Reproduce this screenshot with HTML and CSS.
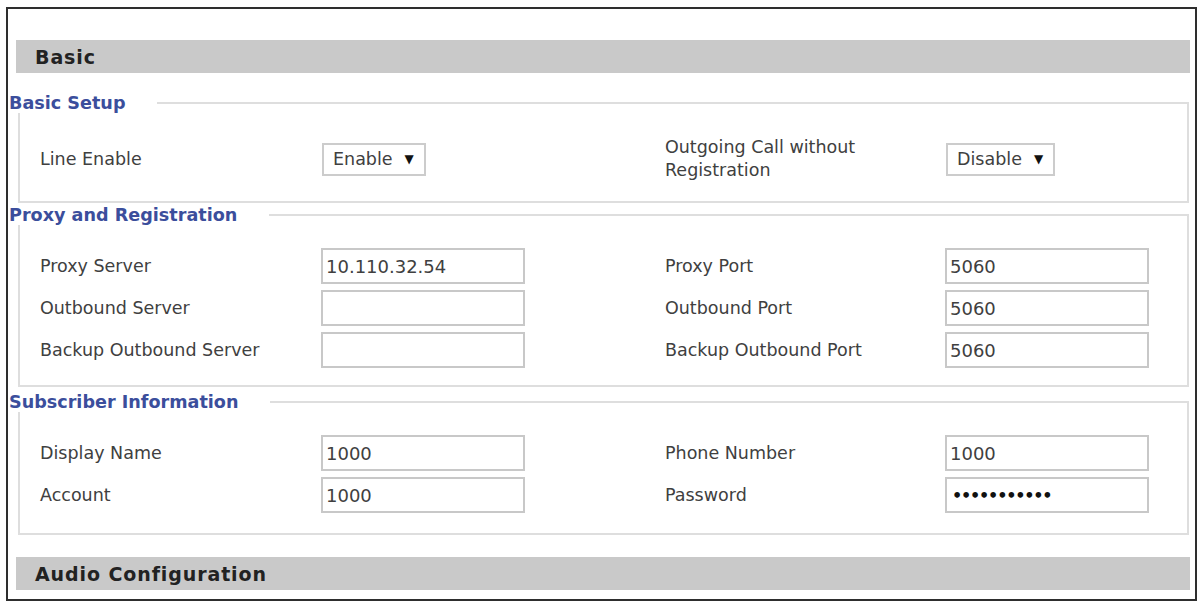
FILE: index.html
```html
<!DOCTYPE html>
<html>
<head>
<meta charset="utf-8">
<title>Line Basic</title>
<link rel="stylesheet" href="styles.css">
</head>
<body>
<div class="frame">
  <div class="bar">Basic</div>

  <fieldset class="group group-first">
    <legend class="legend">Basic Setup</legend>
    <div class="grid">
      <div class="row row-tall">
        <span class="label">Line Enable</span>
        <span class="cell"><span class="select">Enable <span class="arrow">▼</span></span></span>
        <span class="label label-two">Outgoing Call without<br>Registration</span>
        <span class="cell"><span class="select">Disable <span class="arrow">▼</span></span></span>
      </div>
    </div>
  </fieldset>

  <fieldset class="group group-second">
    <legend class="legend">Proxy and Registration</legend>
    <div class="grid">
      <div class="row">
        <span class="label">Proxy Server</span>
        <span class="cell"><input class="field" type="text" value="10.110.32.54"></span>
        <span class="label">Proxy Port</span>
        <span class="cell"><input class="field" type="text" value="5060"></span>
      </div>
      <div class="row">
        <span class="label">Outbound Server</span>
        <span class="cell"><input class="field" type="text" value=""></span>
        <span class="label">Outbound Port</span>
        <span class="cell"><input class="field" type="text" value="5060"></span>
      </div>
      <div class="row">
        <span class="label">Backup Outbound Server</span>
        <span class="cell"><input class="field" type="text" value=""></span>
        <span class="label">Backup Outbound Port</span>
        <span class="cell"><input class="field" type="text" value="5060"></span>
      </div>
    </div>
  </fieldset>

  <fieldset class="group group-third">
    <legend class="legend">Subscriber Information</legend>
    <div class="grid">
      <div class="row">
        <span class="label">Display Name</span>
        <span class="cell"><input class="field" type="text" value="1000"></span>
        <span class="label">Phone Number</span>
        <span class="cell"><input class="field" type="text" value="1000"></span>
      </div>
      <div class="row">
        <span class="label">Account</span>
        <span class="cell"><input class="field" type="text" value="1000"></span>
        <span class="label">Password</span>
        <span class="cell"><input class="field field-pass" type="password" value="12345678901"></span>
      </div>
    </div>
  </fieldset>

  <div class="bar bar-audio">Audio Configuration</div>
</div>
</body>
</html>
```

FILE: styles.css
```css
html, body {
  margin: 0;
  padding: 0;
  background: #ffffff;
}

body {
  width: 1201px;
  font-family: "DejaVu Sans", Verdana, sans-serif;
  color: #3a3a3a;
}

.frame {
  margin: 7px 4px 0 6px;
  border: 2px solid #2e2e2e;
  padding: 31px 5px 9px 8px;
}

.bar {
  height: 33px;
  background: #c9c9c9;
  font-weight: bold;
  font-size: 19px;
  letter-spacing: 0.9px;
  color: #222222;
  padding-left: 19px;
  display: flex;
  align-items: center;
}

.bar-audio {
  margin-top: 22px;
}

.group {
  margin: 0 1px 0 2px;
  border: 2px solid #dedede;
  padding: 0 0 16px 0;
  min-width: 0;
}

.group-first {
  margin-top: 20px;
  padding-bottom: 18px;
}

.group-second {
  margin-top: 2px;
  padding-bottom: 14px;
}

.group-third {
  margin-top: 5px;
  padding-bottom: 17px;
}

.legend {
  margin-left: -11px;
  padding: 0 32px 0 0;
  font-weight: bold;
  font-size: 17.6px;
  line-height: 20px;
  color: #3b4e9c;
  background: #ffffff;
}

.grid {
  padding: 20px 0 0 20px;
  display: flex;
  flex-direction: column;
}

.group-first .grid {
  padding-top: 22px;
}

.row {
  display: grid;
  grid-template-columns: 281px 344px 280px 204px;
  align-items: center;
  height: 42px;
}

.row-tall {
  height: 48px;
}

.label {
  font-size: 17.5px;
  line-height: 23px;
  color: #404040;
}

.cell {
  display: flex;
  align-items: center;
}

.field {
  box-sizing: border-box;
  width: 204px;
  height: 36px;
  margin: 0;
  border: 2px solid #c8c8c8;
  border-radius: 0;
  padding: 0 3px;
  font-family: "DejaVu Sans", Verdana, sans-serif;
  font-size: 18px;
  color: #404040;
  background: #ffffff;
  outline: none;
}

.field-pass {
  font-size: 16px;
  font-weight: bold;
  color: #111111;
  letter-spacing: -1.2px;
  padding-left: 5px;
}

.select {
  box-sizing: border-box;
  height: 33px;
  border: 2px solid #cccccc;
  padding: 0 10px 0 9px;
  display: inline-flex;
  align-items: center;
  gap: 8px;
  font-size: 17.5px;
  color: #404040;
  background: #ffffff;
  margin-left: 1px;
}

.arrow {
  font-size: 12px;
  color: #111111;
  margin-left: 4px;
}
```
